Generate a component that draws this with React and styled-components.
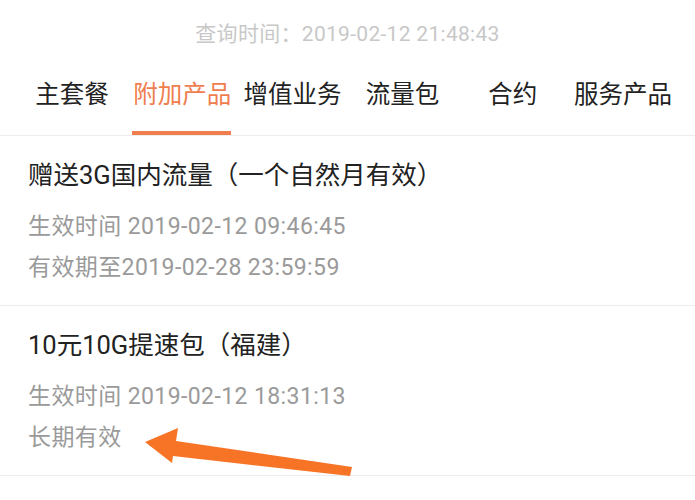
import React from 'react';
import styled, { createGlobalStyle } from 'styled-components';

const GlobalStyle = createGlobalStyle`
  html, body {
    margin: 0;
    padding: 0;
    background: #ffffff;
  }
  body {
    font-family: Roboto, "Noto Sans CJK SC", sans-serif;
  }
`;

const colors = {
  text: '#222222',
  gray: '#9a9a9a',
  light: '#c8c8c8',
  accent: '#f07d4e',
  line: '#ececec',
  arrow: '#f77426',
};

const Page = styled.div`
  position: relative;
  width: 695px;
  height: 500px;
  overflow: hidden;
  background: #fff;
`;

const QueryTime = styled.div`
  height: 64px;
  display: flex;
  align-items: center;
  justify-content: center;
  font-size: 21px;
  letter-spacing: 0.3px;
  color: ${colors.light};
`;

const TabBar = styled.div`
  display: grid;
  grid-template-columns: repeat(6, 1fr);
  padding: 0 17px;
  height: 71px;
  border-bottom: 1px solid ${colors.line};
`;

const Tab = styled.div`
  display: flex;
  justify-content: center;
  font-size: 24.5px;
  color: ${(p) => (p.$active ? colors.accent : colors.text)};
`;

const TabLabel = styled.span`
  position: relative;
  height: 100%;
  box-sizing: border-box;
  padding-bottom: 15px;
  display: flex;
  align-items: center;
  white-space: nowrap;
  &::after {
    content: '';
    display: ${(p) => (p.$active ? 'block' : 'none')};
    position: absolute;
    left: -1px;
    right: 0;
    bottom: 0;
    height: 4px;
    background: ${colors.accent};
  }
`;

const Item = styled.div`
  height: 170px;
  padding: 21px 28px 0;
  box-sizing: border-box;
  border-bottom: 1px solid ${colors.line};
`;

const Title = styled.div`
  font-size: 25.5px;
  line-height: 36px;
  color: ${colors.text};
  margin-bottom: 13px;
`;

const Meta = styled.div`
  font-size: 23px;
  letter-spacing: 0.4px;
  line-height: 41px;
  color: ${colors.gray};
`;

const Arrow = styled.svg`
  position: absolute;
  left: 0;
  top: 0;
  pointer-events: none;
`;

const tabs = ['主套餐', '附加产品', '增值业务', '流量包', '合约', '服务产品'];

const products = [
  {
    name: '赠送3G国内流量（一个自然月有效）',
    start: '生效时间 2019-02-12 09:46:45',
    end: '有效期至2019-02-28 23:59:59',
  },
  {
    name: '10元10G提速包（福建）',
    start: '生效时间 2019-02-12 18:31:13',
    end: '长期有效',
  },
];

export default function App() {
  return (
    <Page>
      <GlobalStyle />
      <QueryTime>查询时间：2019-02-12 21:48:43</QueryTime>
      <TabBar>
        {tabs.map((t, i) => (
          <Tab key={t} $active={i === 1}>
            <TabLabel $active={i === 1}>{t}</TabLabel>
          </Tab>
        ))}
      </TabBar>
      {products.map((p) => (
        <Item key={p.name}>
          <Title>{p.name}</Title>
          <Meta>{p.start}</Meta>
          <Meta>{p.end}</Meta>
        </Item>
      ))}
      <Arrow width="695" height="500" viewBox="0 0 695 500">
        <polygon
          points="145,442 178,428 176,441 352,467 350,476 173,456 172,463"
          fill={colors.arrow}
        />
      </Arrow>
    </Page>
  );
}
